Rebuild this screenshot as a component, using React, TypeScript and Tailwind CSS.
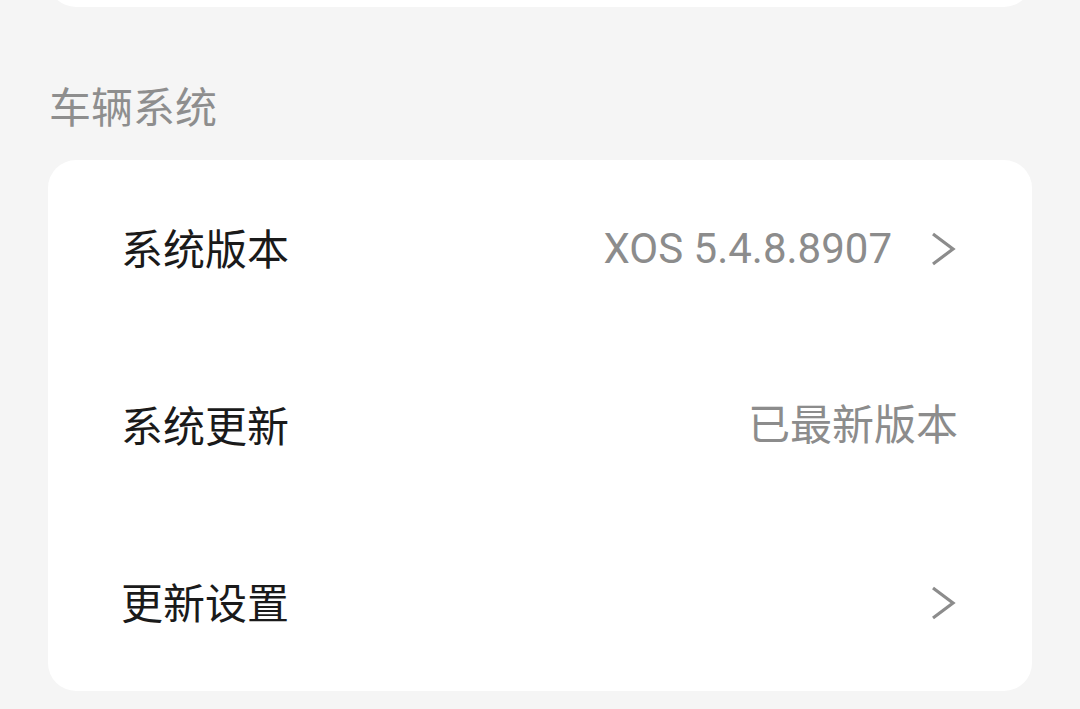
const font = {
  fontFamily: '"Noto Sans CJK SC", "Noto Sans", sans-serif',
};

const latin = {
  fontFamily: 'Roboto, "Noto Sans CJK SC", sans-serif',
};

function Row({
  label,
  value,
  chevron,
}: {
  label: string;
  value?: string;
  chevron?: boolean;
}) {
  return (
    <div className="flex items-center h-[177px] pl-[73px] pr-[74px]">
      <div className="flex-1 mb-[4px] text-[42px] leading-none text-[#1a1a1a]">{label}</div>
      {value && (
        <div className="text-[42px] leading-none text-[#8c8c8c]" style={latin}>
          {value}
        </div>
      )}
      {chevron && (
        <svg
          width="30"
          height="40"
          viewBox="0 0 30 40"
          className={value ? "ml-[36px]" : ""}
        >
          <path
            d="M5 5 L25 20 L5 35"
            fill="none"
            stroke="#8c8c8c"
            strokeWidth="3.2"
            strokeLinecap="butt"
            strokeLinejoin="miter"
          />
        </svg>
      )}
    </div>
  );
}

export default function App() {
  return (
    <div className="w-[1080px] h-[709px] overflow-hidden bg-[#f5f5f5]" style={font}>
      <div className="mx-[48px] -mt-[53px] h-[60px] rounded-[28px] bg-white" />
      <div className="px-[49px] pt-[75px] pb-[33px] text-[42px] leading-[45px] text-[#8e8e8e]">
        车辆系统
      </div>
      <div className="mx-[48px] rounded-[28px] bg-white">
        <Row label="系统版本" value="XOS 5.4.8.8907" chevron />
        <Row label="系统更新" value="已最新版本" />
        <Row label="更新设置" chevron />
      </div>
    </div>
  );
}
